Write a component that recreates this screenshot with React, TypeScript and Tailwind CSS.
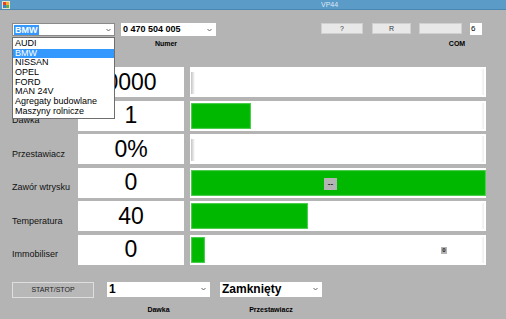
import React from 'react';

const brands = ['AUDI', 'BMW', 'NISSAN', 'OPEL', 'FORD', 'MAN 24V', 'Agregaty budowlane', 'Maszyny rolnicze'];

interface Row {
  label: string;
  value: string;
  fill: number; // px of bar filled
  badge?: { text: string; cls: string };
}

// first row's label sits under the open dropdown, so it is left empty
const rows: Row[] = [
  { label: '', value: '0000', fill: 0 },
  { label: 'Dawka', value: '1', fill: 60 },
  { label: 'Przestawiacz', value: '0%', fill: 0 },
  { label: 'Zawór wtrysku', value: '0', fill: 295, badge: { text: '--', cls: 'left-[134px] top-[10px] w-[13px] h-[12px] text-[8px]' } },
  { label: 'Temperatura', value: '40', fill: 117 },
  { label: 'Immobiliser', value: '0', fill: 14, badge: { text: '0', cls: 'left-[251px] top-[12px] w-[6px] h-[7px] text-[6px]' } },
];

const Chevron = () => (
  <svg width="5" height="4" viewBox="0 0 5 4" className="shrink-0">
    <path d="M0.5 1 L2.5 3 L4.5 1" fill="none" stroke="#555" strokeWidth="0.9" />
  </svg>
);

const Bar: React.FC<{ row: Row }> = ({ row }) => {
  const full = row.fill >= 295;
  return (
    <div className="relative w-[296px] h-full bg-white overflow-hidden">
      <div className="flex h-full py-[2px] pl-[1px]">
        {row.fill > 0 ? (
          <div
            className="h-full bg-[#00b800] shadow-[inset_0_0_1px_1px_#55cf55]"
            style={{ width: row.fill }}
          />
        ) : (
          <div className="mt-[3px] h-[22px] w-[4px] bg-gradient-to-r from-[#c4c4c4] to-white" />
        )}
      </div>
      {!full && (
        <div className="absolute right-[2px] top-[2px] bottom-[2px] w-[3px] bg-gradient-to-r from-white to-[#ececec]" />
      )}
      {row.badge && (
        <div className={`absolute flex items-center justify-center bg-[#b4b4b4] text-[#222] font-bold leading-none ${row.badge.cls}`}>
          {row.badge.text}
        </div>
      )}
    </div>
  );
};

export default function App() {
  return (
    <div className="relative w-[506px] h-[319px] overflow-hidden bg-[#b4b4b4] font-['Liberation_Sans',Arial,sans-serif] text-black">
      {/* title bar */}
      <div className="relative flex items-center h-[10px] bg-[#5a9bc8] border-b border-[#4a86b2]">
        <svg width="8" height="8" viewBox="0 0 8 8" className="ml-[2px]">
          <rect x="0" y="0" width="8" height="8" fill="#e9e3c8" />
          <rect x="1" y="1" width="3" height="3" fill="#e0452b" />
          <rect x="4" y="1" width="3" height="3" fill="#f4b02c" />
          <rect x="1" y="4" width="3" height="3" fill="#3f7fd0" />
          <rect x="4" y="4" width="3" height="3" fill="#5db04a" />
        </svg>
        <span className="ml-[311px] text-[7px] leading-none text-[#dce8f3]">VP44</span>
      </div>

      {/* top controls */}
      <div className="flex items-start mt-[13px] ml-[12px] h-[13px]">
        <div className="flex items-center w-[103px] h-[13px] bg-white border border-[#8a8a8a] pr-[3px]">
          <span className="ml-[1px] px-[1px] bg-[#3399ff] text-white text-[9px] leading-[10px] font-bold">BMW</span>
          <span className="flex-1" />
          <Chevron />
        </div>
        <div className="flex items-center ml-[6px] w-[95px] h-[13px] bg-white pl-[2px] pr-[4px]">
          <span className="text-[9px] leading-none font-bold">0 470 504 005</span>
          <span className="flex-1" />
          <Chevron />
        </div>
        <div className="ml-[105px] w-[42px] h-[11px] bg-[#e8e8e8] border border-[#d0d0d0] flex items-center justify-center text-[7px] leading-none text-[#333]">?</div>
        <div className="ml-[9px] w-[39px] h-[11px] bg-[#e8e8e8] border border-[#d0d0d0] flex items-center justify-center text-[7px] leading-none text-[#333]">R</div>
        <div className="ml-[8px] w-[43px] h-[11px] bg-[#e8e8e8] border border-[#d0d0d0]" />
        <div className="ml-[8px] w-[12px] h-[12px] bg-white flex items-center pl-[1px] text-[8px] leading-none">6</div>
      </div>

      {/* top labels */}
      <div className="flex mt-[4px] ml-[12px] h-[8px] text-[7px] leading-[8px] font-bold">
        <div className="w-[103px]" />
        <div className="ml-[6px] w-[90px] text-center">Numer</div>
        <div className="ml-[236px] w-[20px] text-center">COM</div>
      </div>

      {/* measurement rows */}
      <div className="flex flex-col gap-[3.5px] mt-[19px] ml-[12px]">
        {rows.map((row) => (
          <div key={row.value + row.label} className="flex h-[30px]">
            <div className="flex items-center w-[66px] pt-[10px] text-[9px] leading-none text-[#111]">{row.label}</div>
            <div className="flex items-center justify-center w-[106px] bg-white text-[23px] leading-none">{row.value}</div>
            <div className="ml-[6px] h-full">
              <Bar row={row} />
            </div>
          </div>
        ))}
      </div>

      {/* bottom controls */}
      <div className="flex items-start mt-[17px] ml-[12px]">
        <div className="flex items-center justify-center w-[82px] h-[16px] bg-[#b8b8b8] border border-[#dedede] text-[7px] leading-none text-[#222]">START/STOP</div>
        <div className="flex items-center ml-[13px] w-[103px] h-[15px] bg-white pl-[2px] pr-[4px]">
          <span className="text-[12px] leading-none font-bold">1</span>
          <span className="flex-1" />
          <Chevron />
        </div>
        <div className="flex items-center ml-[10px] w-[102px] h-[15px] bg-white pl-[2px] pr-[4px]">
          <span className="text-[12px] leading-none font-bold">Zamknięty</span>
          <span className="flex-1" />
          <Chevron />
        </div>
      </div>
      <div className="flex mt-[8px] ml-[12px] text-[7px] leading-[8px] font-bold">
        <div className="w-[82px]" />
        <div className="ml-[13px] w-[103px] text-center">Dawka</div>
        <div className="ml-[10px] w-[102px] text-center">Przestawiacz</div>
      </div>

      {/* open brand dropdown */}
      <div className="absolute left-[12px] top-[37px] w-[103px] bg-white border border-[#6e6e6e] py-[1px]">
        {brands.map((b) => (
          <div
            key={b}
            className={`h-[9.7px] pl-[2px] text-[9px] leading-[9.7px] ${b === 'BMW' ? 'bg-[#3399ff] text-white' : 'text-black'}`}
          >
            {b}
          </div>
        ))}
      </div>
    </div>
  );
}
